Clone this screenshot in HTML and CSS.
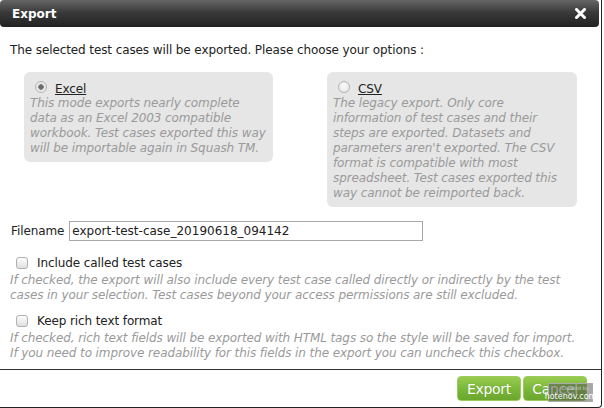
FILE: index.html
```html
<!DOCTYPE html>
<html lang="en">
<head>
<meta charset="utf-8">
<title>Export</title>
<link rel="stylesheet" href="styles.css">
</head>
<body>
<div class="dialog">
  <div class="titlebar">
    <span class="title">Export</span>
    <span class="close" aria-label="close">
      <svg width="11" height="11" viewBox="0 0 11 11"><path d="M1.5 1.5 L9.5 9.5 M9.5 1.5 L1.5 9.5" stroke="#fff" stroke-width="3" stroke-linecap="square" fill="none"/></svg>
    </span>
  </div>
  <div class="content">
    <p class="intro">The selected test cases will be exported. Please choose your options :</p>
    <div class="options">
      <div class="option">
        <label class="opt-head"><input type="radio" name="fmt" class="radio" checked><span class="opt-name">Excel</span></label>
        <div class="help">This mode exports nearly complete data as an Excel 2003 compatible workbook. Test cases exported this way will be importable again in Squash TM.</div>
      </div>
      <div class="option">
        <label class="opt-head"><input type="radio" name="fmt" class="radio"><span class="opt-name">CSV</span></label>
        <div class="help">The legacy export. Only core information of test cases and their steps are exported. Datasets and parameters aren't exported. The CSV format is compatible with most spreadsheet. Test cases exported this way cannot be reimported back.</div>
      </div>
    </div>
    <div class="filename-row">
      <label class="fn-label" for="fn">Filename</label>
      <input id="fn" class="fn-input" type="text" value="export-test-case_20190618_094142">
    </div>
    <div class="check-block">
      <label class="check-row"><input type="checkbox" class="checkbox"><span>Include called test cases</span></label>
      <div class="help wide">If checked, the export will also include every test case called directly or indirectly by the test cases in your selection. Test cases beyond your access permissions are still excluded.</div>
    </div>
    <div class="check-block second">
      <label class="check-row"><input type="checkbox" class="checkbox"><span>Keep rich text format</span></label>
      <div class="help wide">If checked, rich text fields will be exported with HTML tags so the style will be saved for import.<br>If you need to improve readability for this fields in the export you can uncheck this checkbox.</div>
    </div>
  </div>
  <div class="footer">
    <button class="btn">Export</button>
    <button class="btn">Cancel</button>
  </div>
  <div class="watermark"><span class="wm-small">Created by</span><span class="wm-big">hotenov.com</span></div>
</div>
</body>
</html>
```
FILE: styles.css
```css
html, body {
  margin: 0;
  padding: 0;
  background: #fff;
}
body {
  font-family: "DejaVu Sans", Verdana, sans-serif;
  font-size: 12px;
  letter-spacing: -0.1px;
  color: #222;
}
.dialog {
  position: relative;
  width: 601px;
  height: 407px;
  border-right: 1px solid #222;
  border-bottom: 1px solid #222;
  border-bottom-right-radius: 4px;
  display: flex;
  flex-direction: column;
}
.titlebar {
  width: 599px;
  height: 27px;
  border-radius: 4px;
  background: linear-gradient(#666 0%, #3a3a3a 45%, #222 100%);
  display: flex;
  align-items: center;
  justify-content: space-between;
  box-sizing: border-box;
  padding: 0 13px 0 12px;
}
.title {
  color: #fff;
  font-weight: bold;
  font-size: 12px;
  letter-spacing: 0;
}
.close {
  display: flex;
  width: 11px;
  height: 11px;
}
.content {
  padding: 16px 10px 0 10px;
  flex: 1;
}
.intro {
  margin: 0;
  line-height: 15px;
}
.options {
  display: flex;
  align-items: flex-start;
  gap: 54px;
  margin: 14px 0 0 14px;
}
.option {
  width: 249px;
  box-sizing: border-box;
  background: #e6e6e6;
  border-radius: 6px;
  padding: 7px 5px 6px 6px;
}
.option + .option {
  width: 250px;
}
.opt-head {
  display: flex;
  align-items: center;
  height: 17px;
  padding-left: 5px;
}
.radio {
  appearance: none;
  -webkit-appearance: none;
  width: 12px;
  height: 12px;
  margin: 0 8px 0 0;
  border-radius: 50%;
  border: 1px solid #b4b4b4;
  background: radial-gradient(circle at 50% 40%, #fafafa 0%, #e2e2e2 100%);
  box-sizing: border-box;
  position: relative;
  top: -1px;
}
.radio:checked {
  background: radial-gradient(circle, #666 0, #777 2.5px, #e4e4e4 3px, #f2f2f2 100%);
}
.opt-name {
  text-decoration: underline;
  color: #222;
  position: relative;
  top: 1px;
}
.help {
  font-style: italic;
  color: #9a9a9a;
  line-height: 15px;
}
.filename-row {
  display: flex;
  align-items: center;
  margin-top: 14px;
  padding-left: 1px;
}
.fn-label {
  margin-right: 5px;
}
.fn-input {
  width: 354px;
  height: 20px;
  box-sizing: border-box;
  border: 1px solid #a9a9a9;
  padding: 0 2px;
  font: inherit;
  font-size: 12px;
  color: #222;
  margin: 0;
}
.check-block {
  margin-top: 13px;
}
.check-block.second {
  margin-top: 9px;
}
.check-row {
  display: flex;
  align-items: center;
  height: 17px;
  padding-left: 6px;
}
.checkbox {
  appearance: none;
  -webkit-appearance: none;
  width: 12px;
  height: 12px;
  margin: 0 9px 0 0;
  border: 1px solid #b0b0b0;
  border-radius: 3px;
  background: linear-gradient(#fdfdfd, #e0e0e0);
  box-sizing: border-box;
}
.wide {
  margin-top: 2px;
}
.footer {
  height: 38px;
  border-top: 1px solid #333;
  display: flex;
  justify-content: flex-end;
  align-items: flex-start;
  gap: 2px;
  padding: 6px 14px 0 0;
  box-sizing: border-box;
}
.btn {
  width: 64px;
  height: 25px;
  border: 1px solid #9bcb5a;
  border-radius: 4px;
  background: linear-gradient(#98cc50 0%, #7cb83a 50%, #6aa62c 100%);
  color: #fff;
  font-family: "DejaVu Sans", Verdana, sans-serif;
  font-size: 14px;
  letter-spacing: -0.3px;
  padding: 0;
  text-shadow: 0 0 1px rgba(60,90,20,0.4);
}
.watermark {
  position: absolute;
  left: 548px;
  top: 383px;
  width: 43px;
  height: 17px;
  background: rgba(80,80,80,0.5);
  border: 1px solid #aaa;
  display: flex;
  flex-direction: column;
  align-items: center;
  justify-content: flex-end;
  line-height: 7px;
  color: #fff;
  letter-spacing: 0;
}
.wm-small {
  font-size: 5px;
  color: #ccc;
  align-self: flex-end;
  padding-right: 3px;
}
.wm-big {
  font-size: 8px;
  line-height: 9px;
}
```
